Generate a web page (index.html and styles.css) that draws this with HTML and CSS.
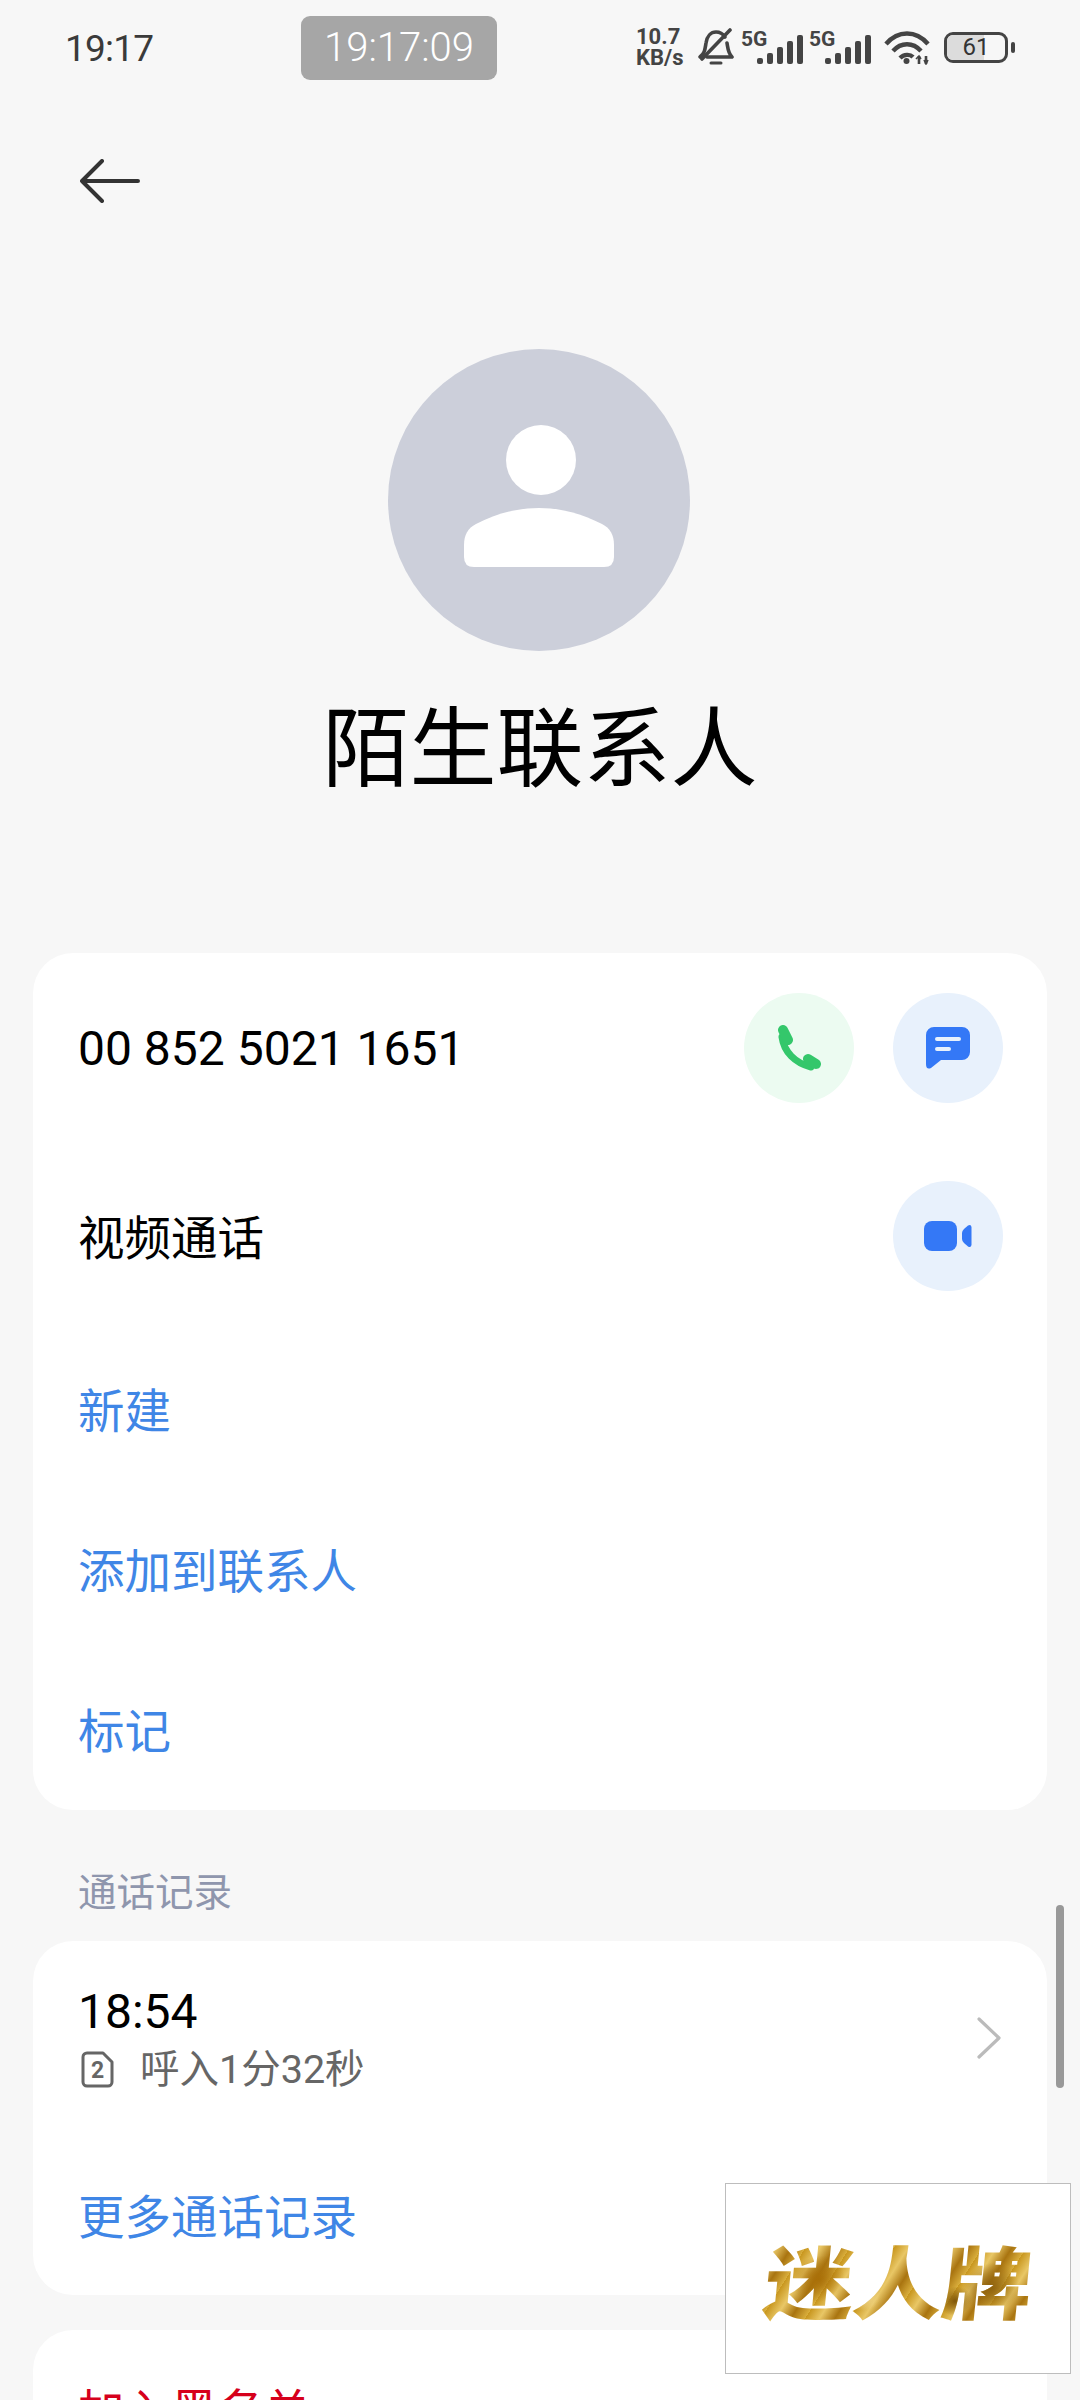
FILE: index.html

```html
<!doctype html>
<html>
<head>
  <meta charset='utf-8'>
  <title>陌生联系人</title>
  <link rel="stylesheet" href="styles.css">
</head>
<body>
<div class='page'>
  <div class='status'>
    <span class='clock'>19:17</span>
    <span class='timer'>19:17:09</span>
    <div class='status-icons'>
      <span class='speed'>10.7<br>KB/s</span>
      <svg class='bell' width='37' height='38' viewBox='0 0 37 38' fill='none' stroke='#444' stroke-width='3.6' stroke-linecap='round' stroke-linejoin='round'>
        <path d='M3 29 C8 25 8 21 9 15 C10 8 14 4 19 4 C23 4 26 6 28 9'/>
        <path d='M30 15 C31 21 31 25 35 29 H10'/>
        <path d='M5 31 L33 2'/>
        <path d='M14 35 H24' stroke-width='3'/>
      </svg>
      <div class='signal'>
        <span class='net'>5G</span>
        <svg width='46' height='29' viewBox='0 0 46 29' fill='#444'>
          <rect x='0' y='23' width='6' height='6' rx='2'/><rect x='10' y='18' width='6' height='11' rx='2'/><rect x='20' y='12' width='6' height='17' rx='2'/><rect x='30' y='6' width='6' height='23' rx='2'/><rect x='40' y='0' width='6' height='29' rx='2'/>
        </svg>
      </div>
      <div class='signal'>
        <span class='net'>5G</span>
        <svg width='46' height='29' viewBox='0 0 46 29' fill='#444'>
          <rect x='0' y='23' width='6' height='6' rx='2'/><rect x='10' y='18' width='6' height='11' rx='2'/><rect x='20' y='12' width='6' height='17' rx='2'/><rect x='30' y='6' width='6' height='23' rx='2'/><rect x='40' y='0' width='6' height='29' rx='2'/>
        </svg>
      </div>
      <svg class='wifi' width='46' height='35' viewBox='0 0 46 35' fill='none' stroke='#444' stroke-width='4.4'>
        <path d='M2 14 C14 0 32 0 44 14'/>
        <path d='M9 21 C17 12 29 12 37 21'/>
        <path d='M16 28 C20 24 26 24 29 27'/>
        <circle cx='22.500' cy='31' r='3' fill='#444' stroke='none'/>
        <path d='M35 26 V34 M42 26 V34' stroke-width='2.600'/>
        <path d='M32 29 L35 26 L37 29 M40 30 L42 34 L44 30' stroke-width='1.600'/>
      </svg>
      <div class='battery'>
        <div class='battery-body'>
          <div class='battery-fill'></div>
          <span class='battery-num'>61</span>
        </div>
        <span class='battery-nub'></span>
      </div>
    </div>
  </div>

  <div class='topbar'>
    <svg width='60' height='44' viewBox='0 0 60 44' fill='none' stroke='#333' stroke-width='4' stroke-linecap='round' stroke-linejoin='round'>
      <path d='M58 22 H2 M22 2 L2 22 L22 42'/>
    </svg>
  </div>

  <div class='profile'>
    <svg class='avatar' width='302' height='302' viewBox='0 0 302 302'>
      <circle cx='151' cy='151' r='151' fill='#cccfda'/>
      <circle cx='153' cy='111' r='35' fill='#fff'/>
      <path fill='#fff' d='M76 196 C76 186 80 179 88 175 C108 165 128 159 151 159 C174 159 194 165 214 175 C222 179 226 186 226 196 V208 Q226 218 216 218 H86 Q76 218 76 208 Z'/>
    </svg>
    <div class='name'>陌生联系人</div>
  </div>

  <div class='card first'>
    <div class='row phone-row'>
      <span class='number'>00 852 5021 1651</span>
      <div class='actions'>
        <span class='round green'>
          <svg width='46' height='46' viewBox='0 0 46 46' fill='none' stroke='#34c76b' stroke-linecap='round'>
            <path d='M6 12 C8 27 19 38 35 42' stroke-width='7'/>
            <path d='M7 5 L12 15' stroke-width='10'/>
            <path d='M32 34 L40 39' stroke-width='10'/>
          </svg>
        </span>
        <span class='round blue'>
          <svg width='44' height='42' viewBox='0 0 44 42'>
            <path fill='#3478f6' d='M8 0 H36 A8 8 0 0 1 44 8 V25 A8 8 0 0 1 36 33 H15 L5 41 Q0 43 0 37 V8 A8 8 0 0 1 8 0 Z'/>
            <path stroke='#e8f1fc' stroke-width='4' stroke-linecap='round' d='M11 12 H33 M11 22 H23'/>
          </svg>
        </span>
      </div>
    </div>
    <div class='row video-row'>
      <span class='label'>视频通话</span>
      <span class='round blue'>
        <svg width='48' height='30' viewBox='0 0 48 30' fill='#3478f6'>
          <rect x='0' y='0' width='33' height='30' rx='8'/>
          <path d='M38 12 Q38 10 40 8 L44 4.500 Q47 3 47.500 6 V24 Q47 27 44 25.500 L40 22 Q38 20 38 18 Z'/>
        </svg>
      </span>
    </div>
    <div class='row link-row'>新建</div>
    <div class='row link-row'>添加到联系人</div>
    <div class='row link-row'>标记</div>
  </div>

  <div class='section'>通话记录</div>

  <div class='card'>
    <div class='row call-row'>
      <div class='call-info'>
        <div class='call-time'>18:54</div>
        <div class='call-detail'>
          <svg class='sim' width='33' height='37' viewBox='0 0 33 37' fill='none' stroke='#666' stroke-width='3'>
            <path d='M6 2 H22 L31 11 V31 A4 4 0 0 1 27 35 H6 A4 4 0 0 1 2 31 V6 A4 4 0 0 1 6 2 Z' stroke-linejoin='round'/>
            <text x='16.500' y='27' text-anchor='middle' class='sim-num'>2</text>
          </svg>
          <span>呼入1分32秒</span>
        </div>
      </div>
      <svg width='24' height='42' viewBox='0 0 24 42' fill='none' stroke='#bbb' stroke-width='3.200' stroke-linecap='round' stroke-linejoin='round'>
        <path d='M2 2 L22 21 L2 40'/>
      </svg>
    </div>
    <div class='row link-row more'>更多通话记录</div>
  </div>

  <div class='card last'>
    <div class='row link-row danger'>加入黑名单</div>
  </div>

  <div class='scrollbar'></div>
  <div class='stamp'><span class='stamp-text'>迷人牌</span></div>
</div>
</body>
</html>
```

FILE: styles.css

```css
*{margin:0;padding:0;box-sizing:border-box;}
html,body{background:#f7f7f7;}
body{width:1080px;height:2400px;overflow:hidden;font-family:Roboto,"Noto Sans CJK SC",sans-serif;}
.page{position:relative;width:1080px;height:2400px;overflow:hidden;}

.status{display:flex;align-items:center;height:94px;padding:0 65px 0 65px;}
.clock{font-size:37px;letter-spacing:-.8px;color:#3a3a3a;width:236px;line-height:94px;padding-top:3px;}
.timer{width:196px;height:64px;margin-top:1px;background:#a6a6a6;border-radius:9px;color:#fff;font-size:40px;font-weight:300;line-height:64px;text-align:center;}
.status-icons{display:flex;align-items:center;margin-left:auto;height:50px;}
.speed{font-size:22px;font-weight:700;line-height:21px;color:#444;width:50px;white-space:nowrap;}
.bell{margin-left:11px;}
.signal{position:relative;display:flex;align-items:flex-end;width:62px;height:33px;margin-left:7px;justify-content:flex-end;}
.signal+.signal{margin-left:6px;}
.net{position:absolute;left:0;top:-2px;font-size:21px;font-weight:700;line-height:20px;color:#444;}
.wifi{margin-left:13px;}
.battery{display:flex;align-items:center;margin-left:14px;}
.battery-body{position:relative;width:64px;height:31px;border:3px solid #444;border-radius:9px;overflow:hidden;}
.battery-fill{width:37px;height:100%;background:#dcdcdc;}
.battery-num{position:absolute;top:0;left:0;right:0;text-align:center;font-size:24px;line-height:25px;color:#333;}
.battery-nub{display:block;width:4px;height:11px;background:#444;border-radius:2px;margin-left:3px;}

.topbar{height:255px;padding:65px 0 0 80px;}
.topbar svg{display:block;}

.profile{display:flex;flex-direction:column;align-items:center;}
.avatar{display:block;margin-right:2px;}
.name{margin-top:39px;font-size:87px;line-height:120px;color:#000;height:120px;}

.card{margin:0 33px;background:#fff;border-radius:40px;}
.first{margin-top:143px;}
.row{display:flex;align-items:center;padding:0 45px;}
.phone-row{height:190px;justify-content:space-between;}
.number{font-size:48px;color:#000;}
.actions{display:flex;gap:39px;}
.round{display:flex;align-items:center;justify-content:center;width:110px;height:110px;border-radius:50%;}
.green{background:#ecfbf1;}
.blue{background:#e8f1fc;}
.video-row{height:187px;justify-content:space-between;padding-bottom:2px;}
.label{font-size:46.500px;padding-bottom:2px;color:#000;}
.link-row{height:160px;font-size:46.500px;color:#3f86e6;padding-bottom:5px;}
.phone-row,.video-row{padding-right:44px;}

.section{padding-left:78px;margin-top:61px;height:70px;font-size:38.500px;line-height:44px;color:#8f96ad;}

.call-row{height:191px;justify-content:space-between;padding-right:46px;padding-top:2px;}
.call-time{font-size:48px;line-height:56px;color:#000;}
.call-detail{display:flex;align-items:center;margin-top:8px;font-size:39.500px;line-height:44px;color:#666;padding-left:3px;}
.sim{margin-right:26px;}
.sim-num{font-family:Roboto,sans-serif;font-size:23px;font-weight:700;fill:#666;stroke:none;}
.more{height:163px;padding-bottom:0;}

.last{margin-top:35px;}
.danger{color:#d6001c;}

.scrollbar{position:absolute;left:1056px;top:1905px;width:8px;height:183px;border-radius:4px;background:#999;}
.stamp{position:absolute;left:725px;top:2183px;width:346px;height:191px;background:#fff;border:1px solid #bdbdbd;display:flex;align-items:center;justify-content:center;}
.stamp-text{display:block;font-family:"Noto Sans CJK SC",sans-serif;font-weight:900;font-size:90px;line-height:100px;letter-spacing:-1px;transform:scaleY(.88) skewX(-5deg);color:transparent;background:radial-gradient(circle at 20% 50%,#a96f08 0,transparent 12%),radial-gradient(circle at 38% 70%,#f3dc98 0,transparent 9%),radial-gradient(circle at 60% 30%,#f0d890 0,transparent 10%),radial-gradient(circle at 85% 60%,#8f6310 0,transparent 12%),radial-gradient(circle at 72% 75%,#7f5608 0,transparent 8%),repeating-linear-gradient(115deg,#c8961e 0,#e9c766 13px,#a97410 27px,#d9ae3c 40px);-webkit-background-clip:text;background-clip:text;}
```
